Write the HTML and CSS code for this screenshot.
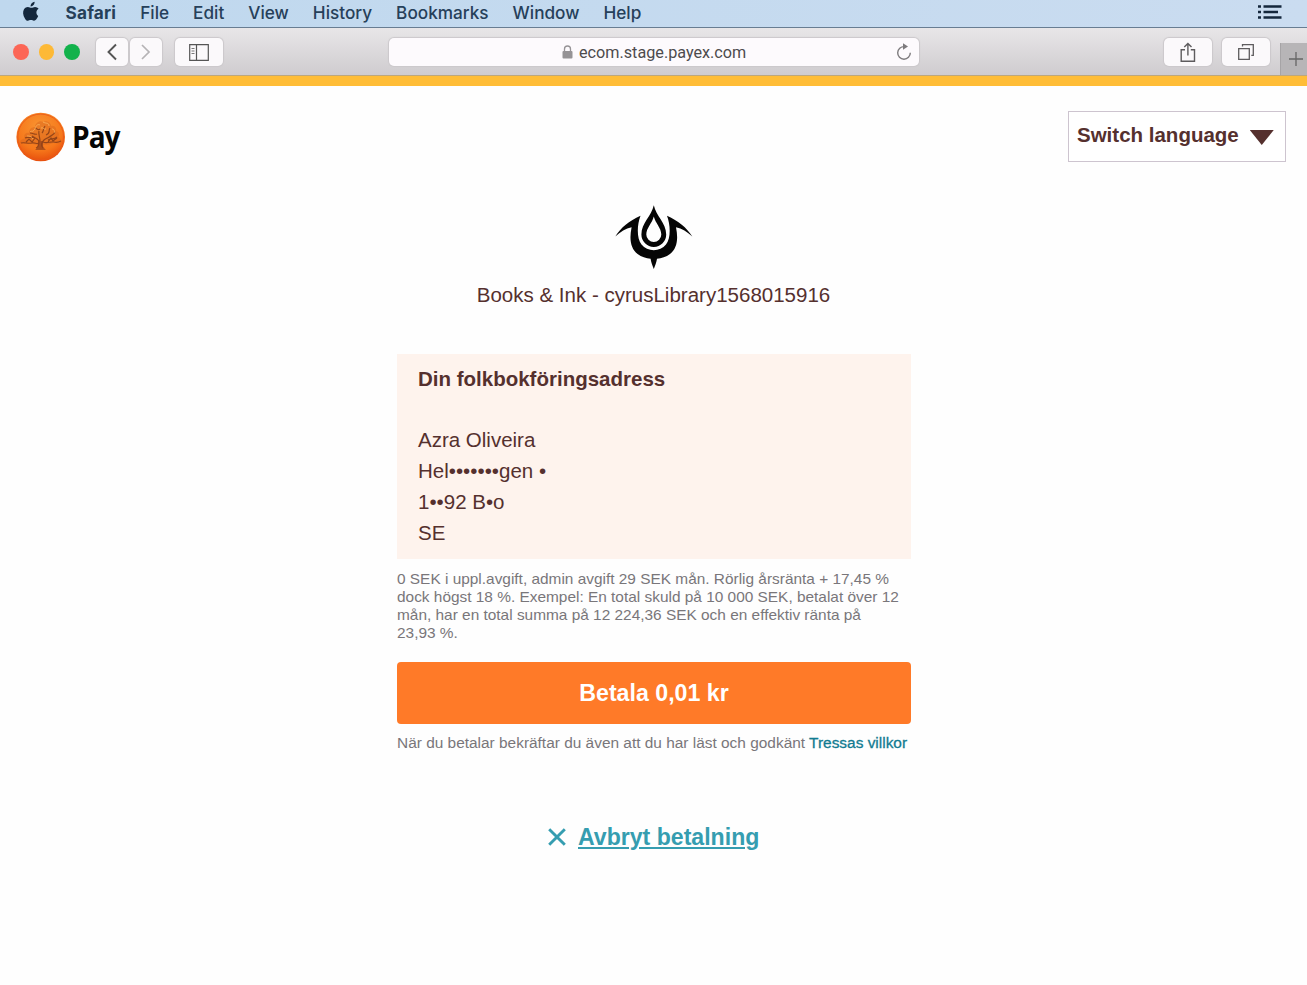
FILE: index.html
```html
<!DOCTYPE html>
<html lang="sv">
<head>
<meta charset="utf-8">
<title>PayEx</title>
<link rel="stylesheet" href="styles.css">
</head>
<body>
<nav class="menubar">
  <svg class="apple" width="18" height="22" viewBox="0 0 18 22"><path d="M12.6 0.8c.1 1.300-.4 2.500-1.100 3.300-.8.900-1.900 1.400-2.900 1.300-.1-1.200.4-2.400 1.100-3.200.8-.8 1.900-1.300 2.900-1.400zM16.200 14.900c-.4 1-.7 1.500-1.200 2.300-.8 1.200-1.800 2.600-3.100 2.600-1.100 0-1.500-.7-3-.7s-1.900.7-3 .7c-1.300 0-2.200-1.200-3-2.400C.8 14.300.6 10.300 2 8.200c1-1.500 2.500-2.300 3.900-2.300 1.500 0 2.400.8 3.600.8 1.100 0 1.900-.8 3.600-.8 1.300 0 2.600.7 3.500 1.900-3.100 1.700-2.600 6.100-.4 7.100z"/></svg>
  <span class="menu safari">Safari</span><span class="menu">File</span><span class="menu">Edit</span><span class="menu">View</span><span class="menu">History</span><span class="menu">Bookmarks</span><span class="menu">Window</span><span class="menu">Help</span>
  <svg class="list" width="24" height="14" viewBox="0 0 24 14"><path d="M0 1.500h3M5.500 1.500H23.500M0 7h3M5.500 7H20M0 12.500h3M5.500 12.500H23.500" stroke-width="2.500"/></svg>
</nav>
<header class="toolbar">
  <div class="lights"><i class="dot red"></i><i class="dot yellow"></i><i class="dot green"></i></div>
  <div class="nav-buttons">
    <span class="button half"><svg width="14" height="18" viewBox="0 0 14 18"><path d="M11 1.500 3.500 9l7.500 7.500" stroke="#555" stroke-width="1.900"/></svg></span>
    <span class="button half"><svg width="14" height="18" viewBox="0 0 14 18"><path d="M3 2l7 7-7 7" stroke="#b5b3b5" stroke-width="1.700"/></svg></span>
  </div>
  <span class="button side"><svg width="20" height="17" viewBox="0 0 20 17"><path d="M.7.700h18.600v15.600H.7zM7.500.700v15.600" stroke="#555" stroke-width="1.200"/><path d="M2.500 4.500h3M2.500 7h3M2.500 9.500h3" stroke="#777" stroke-width="1"/></svg></span>
  <div class="address">
    <span class="host"><svg width="11" height="14" viewBox="0 0 11 14"><path d="M2.500 7V4a3 3 0 0 1 6 0v3" stroke="#969396" stroke-width="1.300"/><rect x=".5" y="6" width="10" height="7.500" rx="1" fill="#969396"/></svg><span class="url">ecom.stage.payex.com</span></span>
    <svg class="reload" width="16" height="18" viewBox="0 0 16 18"><path d="M8.300 3.600A6.300 6.300 0 1 0 14.300 9.800" stroke="#7d7a7d" stroke-width="1.400"/><path d="M7 .3l5 3.300-5 3.100z" fill="#7d7a7d"/></svg>
  </div>
  <span class="button tool share"><svg width="16" height="21" viewBox="0 0 16 21"><path d="M5 7.700H1.200v11.600h13.300V7.700h-3.700M7.900 13.500V1.500M4.300 5l3.600-3.600L11.500 5" stroke="#5e5c5e" stroke-width="1.400"/></svg></span>
  <span class="button tool tabs"><svg width="18" height="18" viewBox="0 0 18 18"><path d="M1.700 5.700h10.600v10.600H1.700zM5.500 3.500V1.700h10.800v10.600h-2" stroke="#5e5c5e" stroke-width="1.300"/></svg></span>
  <span class="plus"><svg width="14" height="14" viewBox="0 0 14 14"><path d="M7 0v14M0 7h14" stroke="#666" stroke-width="1.300"/></svg></span>
</header>
<main class="page">
  <div class="top">
    <div class="brand">
      <svg width="50" height="50" viewBox="0 0 50 50">
        <defs>
          <radialGradient id="coin" cx=".48" cy=".3" r=".72"><stop offset="0" stop-color="#f99532"/><stop offset=".65" stop-color="#f6781b"/><stop offset="1" stop-color="#e64b0b"/></radialGradient>
        </defs>
        <circle cx="24.700" cy="25" r="24.300" fill="url(#coin)"/>
        <circle cx="24.700" cy="25" r="22.900" fill="none" stroke="#e8571a" stroke-width=".8"/>
        <path d="M4 31c0-3 3-4 5-5-2-3 1-6 4-5 0-4 3-6 6-6 0-4 5-7 8-5 4-2 8 1 8 4 4-1 6 3 5 5 4 1 3 5 2 6 4 2 4 5 3 6-3 1-6 0-8 0-3 2-7 1-10 2l2 4h-9l2-5c-3 2-6-1-8-1-4 2-7 0-10 0z" fill="#d9661b" opacity=".5"/>
        <path d="M5 31c4-1 7 1 11 0 3-1 5 2 7 0M27 30c4 2 8-1 11 0 3 1 5 0 7-1M20 36c3-1 3-4 3-7-2-3-5-3-7-5M24 29c0-4-2-7-1-10M27 36c-3-3-1-6 1-8 3-3 6-2 8-5M9 26c3-2 6 1 9-1M14 21c3 0 5 2 7 1M19 16c2 0 3 3 5 1M29 14c-2 3-1 5-3 7M34 16c-2 3 1 5-4 7M39 20c-1 3-3 3-6 5M41 25c-3 3-6 1-9 3M10 30l3-3 3 3 3-4M32 30l3-4 2 3 4-3" fill="none" stroke="#7a3516" stroke-width="1.200" opacity=".75"/>
        <path d="M14 20c2-2 2 1 5-3 1-4 3-5 5-4M27 10c3 2 6 0 6 4M36 17c3 0 2 3 3 4M25 16c3-1 2 2 5 1M17 27c-2-3-4-3-6-3" fill="none" stroke="#ffc06a" stroke-width=".9" opacity=".75"/>
        <path d="M22 29h5l0 6 3 3H19l3-3z" fill="#93421a" opacity=".7"/>
      </svg>
      <span class="brand-name">Pay</span>
    </div>
    <div class="language"><span class="language-label">Switch language</span><i class="caret"></i></div>
  </div>
  <div class="merchant">
    <svg class="merchant-logo" width="78" height="64" viewBox="0 0 78 64"><path d="M.3 31.500C6 22.500 14 16 25.500 10.800 22 20 21.500 33 26.500 39.500c6 7.500 18.500 7.500 24.500 0 5-6.500 4.500-19.500 1-28.700C63.500 16 71.500 22.500 77.300 31.500 72 27 67 23.500 61 22.300c2.500 12 1 21-6 26.700-3.800 3-8.500 4.300-13 4.800-.5 3.500-1.700 6.700-3.200 10.200-1.500-3.500-2.700-6.700-3.200-10.200-4.500-.5-9.200-1.800-13-4.800-7-5.700-8.500-14.700-6-26.700C10.600 23.500 5.600 27 .3 31.500z"/><path fill-rule="evenodd" d="M38.800.300C41 11 51.200 18 51.200 29.500a12.400 12.400 0 0 1-24.800 0C26.400 18 36.600 11 38.800.300zM38.800 11.500C37.300 18 31.300 23 31.300 29.500a7.500 7.500 0 0 0 15 0C46.300 23 40.300 18 38.800 11.500z"/></svg>
    <div class="merchant-name">Books &amp; Ink - cyrusLibrary1568015916</div>
  </div>
  <section class="checkout">
    <div class="card">
      <div class="card-title">Din folkbokföringsadress</div>
      <div class="addr">Azra Oliveira</div>
      <div class="addr">Hel•••••••gen •</div>
      <div class="addr">1••92 B•o</div>
      <div class="addr">SE</div>
    </div>
    <p class="terms">0 SEK i uppl.avgift, admin avgift 29 SEK mån. Rörlig årsränta + 17,45 %<br>dock högst 18 %. Exempel: En total skuld på 10 000 SEK, betalat över 12<br>mån, har en total summa på 12 224,36 SEK och en effektiv ränta på<br>23,93 %.</p>
    <button class="pay">Betala 0,01 kr</button>
    <p class="consent">När du betalar bekräftar du även att du har läst och godkänt <a class="terms-link">Tressas villkor</a></p>
    <div class="cancel"><svg width="18" height="18" viewBox="0 0 18 18"><path d="M1.200 1.200l15.600 15.600M16.800 1.200L1.200 16.800" stroke="#359db0" stroke-width="2.900"/></svg><a class="cancel-link">Avbryt betalning</a></div>
  </section>
</main>
</body>
</html>
```
FILE: styles.css
```css
* { box-sizing: border-box; }
body { margin: 0; width: 1307px; height: 985px; overflow: hidden; background: #fefefe; font-family: "Liberation Sans", Arial, sans-serif; color: #55302e; }
svg { display: block; flex: none; fill: none; }
p { margin: 0; }

.menubar { display: flex; align-items: center; height: 28px; padding: 0 25px 1px 22px; background: linear-gradient(90deg, #bfd8ee, #cadcf0); border-bottom: 1px solid #687d92; font: 500 17.200px/24px Inter, sans-serif; color: #26405a; white-space: nowrap; }
.apple { fill: #14273c; margin: 0 25.500px 2px 0; }
.menu { margin-right: 24px; }
.safari { font-weight: 700; letter-spacing: .2px; }
.list { margin: 0 0 2px auto; stroke: #14273c; }

.toolbar { display: flex; align-items: flex-start; height: 48px; padding: 10px 0 0 13px; border-bottom: 1px solid #bda77c; background: linear-gradient(#e8e6e8, #cfcccf); }
.lights { display: flex; gap: 10px; padding: 6px 0 0; width: 83px; }
.dot { width: 15.700px; height: 16px; border-radius: 50%; }
.red { background: #fc6656; }
.yellow { background: #fdb936; }
.green { background: #12b24c; }
.button { display: flex; align-items: center; justify-content: center; height: 28px; background: #fbf9fb; border-radius: 5px; box-shadow: 0 0 1px 1px #cbc8cb; }
.nav-buttons { display: flex; gap: 2px; }
.half { width: 32px; }
.side { width: 48px; margin-left: 13px; }
.address { display: flex; align-items: center; width: 530px; height: 28px; margin-left: 166px; padding: 0 7px 0 173px; background: #fdfafd; border-radius: 5px; box-shadow: 0 0 1px 1px #cbc8cb; }
.host { display: flex; align-items: center; gap: 6px; }
.url { font: 400 16.200px/20px Roboto, sans-serif; color: #4d4b4d; padding-top: 2px; }
.reload { margin-left: auto; }
.tool { width: 48px; }
.share { margin-left: 245px; }
.tabs { margin-left: 10px; }
.plus { display: flex; align-items: center; justify-content: center; width: 27px; height: 32px; margin: 5px 0 0 10px; padding-left: 3px; background: #b7b5b7; border-left: 1px solid #a6a4a6; }

.page { height: 909px; border-top: 10px solid #ffbd37; }
.top { display: flex; justify-content: space-between; padding: 25px 21px 0 16px; }
.brand { display: flex; align-items: center; gap: 6px; height: 52px; }
.brand-name { font: 700 29.500px/40px "Open Sans", sans-serif; color: #050505; letter-spacing: -1px; transform: scaleX(.95); transform-origin: left; }
.language { display: flex; width: 218px; height: 51px; padding: 0 0 0 8px; border: 1px solid #cdc4cf; background: #fff; }
.language-label { font-size: 20.500px; line-height: 46px; font-weight: 700; white-space: nowrap; }
.caret { width: 24px; height: 15px; margin: 18px 0 0 11px; background: #55302e; clip-path: polygon(0 0, 100% 0, 50% 100%); }
.merchant { display: flex; flex-direction: column; align-items: center; margin-top: 42px; }
.merchant-logo { fill: #050505; }
.merchant-name { margin-top: 10px; font-size: 20.530px; line-height: 31px; }
.checkout { width: 514px; margin: 44px auto 0 397px; white-space: nowrap; }
.card { height: 205px; padding: 9px 21px; background: #fef3ed; font-size: 20.500px; line-height: 31px; }
.card-title { margin-bottom: 30px; font-weight: 700; }
.terms { margin-top: 11px; font-size: 15.420px; line-height: 18px; color: #79767a; }
.pay { display: block; width: 514px; height: 62px; margin: 20px 0 0; border: 0; border-radius: 4px; background: #ff7a28; color: #fff; font: 700 23.200px/62px "Liberation Sans", Arial, sans-serif; padding: 0; }
.consent { margin-top: 10px; font-size: 15.430px; line-height: 18px; color: #79767a; }
.terms-link { color: #117b91; -webkit-text-stroke: .3px #117b91; }
.cancel { display: flex; align-items: center; gap: 12px; margin: 69px 0 0 151px; height: 32px; color: #359db0; }
.cancel-link { font-size: 23.100px; font-weight: 700; text-decoration: underline; text-decoration-thickness: 2px; text-underline-offset: 2px; }
```
